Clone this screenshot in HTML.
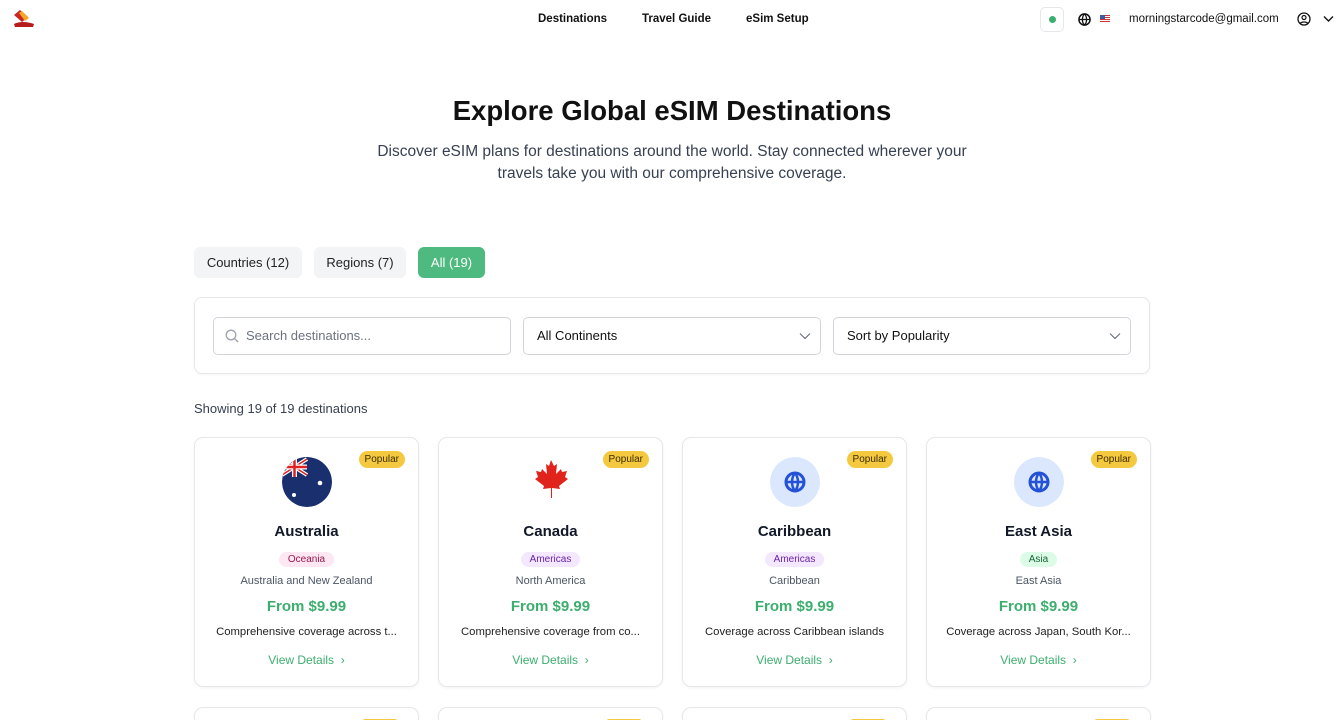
<!DOCTYPE html>
<html style="width:1344px;height:720px;overflow:hidden"><head><meta charset="utf-8"><style>
*{box-sizing:border-box;margin:0;padding:0}
body{width:1344px;height:720px;overflow:hidden;background:#fff;font-family:"Liberation Sans",sans-serif;color:#111827;position:relative}
.abs{position:absolute}
.nav a{position:absolute;top:13px;font-size:11.5px;font-weight:bold;color:#111}
h1{position:absolute;top:95px;width:1344px;text-align:center;font-size:27.5px;font-weight:bold;color:#111}
.sub{position:absolute;top:141px;left:362px;width:620px;text-align:center;font-size:15.5px;line-height:22px;color:#374151}
.tab{position:absolute;top:247px;height:31px;border-radius:6px;background:#f3f4f6;font-size:13px;line-height:31px;text-align:center;color:#222}
.filter{position:absolute;left:194px;top:297px;width:956px;height:77px;border:1px solid #e5e7eb;border-radius:8px;box-shadow:0 1px 2px rgba(0,0,0,.04)}
.inp{position:absolute;top:19px;height:38px;width:298px;border:1px solid #d1d5db;border-radius:5px;font-size:13px;line-height:36px;padding-left:13px;color:#111}
.card{position:absolute;width:225px;height:250px;border:1px solid #e5e7eb;border-radius:9px;text-align:center;box-shadow:0 1px 3px rgba(0,0,0,.05);overflow:hidden}
.pop{position:absolute;right:13px;top:13px;background:#f5c93f;border-radius:10px;font-size:10px;padding:3px 6px;color:#3a2c00}
.ic{position:absolute;left:87px;top:19px;width:50px;height:50px;border-radius:50%}
.name{position:absolute;top:85px;width:100%;font-size:15px;font-weight:bold}
.tag{display:inline-block;position:relative;top:111px;font-size:10px;padding:2px 9px;border-radius:9px}
.reg{position:absolute;top:137px;width:100%;font-size:11px;color:#4b5563}
.price{position:absolute;top:160px;width:100%;font-size:15px;font-weight:bold;color:#3cae6e}
.desc{position:absolute;top:188px;width:100%;font-size:11.3px;color:#222}
.vd{position:absolute;top:215px;width:100%;font-size:12px;color:#3cae6e}
</style></head><body>
<svg class="abs" style="left:12px;top:9px" width="24" height="20" viewBox="0 0 24 20"><path d="M2 6 L8 1 L16 8 L10 13Z" fill="#c62828"/><path d="M7 4 L10 2 L17 9 L13 12Z" fill="#f5a623"/><path d="M2 15 Q10 11 22 15 L21 18 L3 18Z" fill="#b71c1c"/></svg>
<div class="nav"><a style="left:538px">Destinations</a><a style="left:642px">Travel Guide</a><a style="left:746px">eSim Setup</a></div>
<div class="abs" style="left:1040px;top:7px;width:24px;height:25px;border:1px solid #e5e7eb;border-radius:5px"><div class="abs" style="left:8px;top:8px;width:7px;height:7px;border-radius:50%;background:#3cae6e"></div></div>
<svg class="abs" style="left:1078px;top:13px" width="13" height="13" viewBox="0 0 14 14"><circle cx="7" cy="7" r="6" fill="none" stroke="#111" stroke-width="1.6"/><path d="M1 7h12M7 1c-3 3-3 9 0 12M7 1c3 3 3 9 0 12" fill="none" stroke="#111" stroke-width="1.4"/></svg>
<div class="abs" style="left:1100px;top:15px;width:10px;height:7px;background:repeating-linear-gradient(#c33 0 1px,#fff 1px 2px)"><div style="width:5px;height:4px;background:#3c5aa6"></div></div>
<div class="abs" style="left:1129px;top:13px;font-size:11.5px;color:#111">morningstarcode@gmail.com</div>
<svg class="abs" style="left:1297px;top:12px" width="14" height="14" viewBox="0 0 14 14"><circle cx="7" cy="7" r="6" fill="none" stroke="#111" stroke-width="1.3"/><circle cx="7" cy="5.5" r="2" fill="none" stroke="#111" stroke-width="1.2"/><path d="M3.2 11.5c1-2 6.6-2 7.6 0" fill="none" stroke="#111" stroke-width="1.2"/></svg>
<svg class="abs" style="left:1323px;top:15px" width="11" height="8" viewBox="0 0 11 8"><path d="M1 1.5l4.5 4.5L10 1.5" fill="none" stroke="#111" stroke-width="1.4"/></svg>
<h1>Explore Global eSIM Destinations</h1>
<div class="sub">Discover eSIM plans for destinations around the world. Stay connected wherever your travels take you with our comprehensive coverage.</div>
<div class="tab" style="left:194px;width:108px">Countries (12)</div>
<div class="tab" style="left:314px;width:92px">Regions (7)</div>
<div class="tab" style="left:418px;width:67px;background:#4fba80;color:#fff">All (19)</div>
<div class="filter">
<div class="inp" style="left:18px;padding-left:32px;color:#6b7280">Search destinations...<svg class="abs" style="left:11px;top:11px" width="14" height="14" viewBox="0 0 14 14"><circle cx="6" cy="6" r="4.8" fill="none" stroke="#9ca3af" stroke-width="1.3"/><path d="M9.5 9.5L13 13" stroke="#9ca3af" stroke-width="1.3"/></svg></div>
<div class="inp" style="left:328px">All Continents<svg class="abs" style="right:9px;top:14px" width="12" height="8" viewBox="0 0 12 8"><path d="M1 1.5l5 5 5-5" fill="none" stroke="#6b7280" stroke-width="1.2"/></svg></div>
<div class="inp" style="left:638px">Sort by Popularity<svg class="abs" style="right:9px;top:14px" width="12" height="8" viewBox="0 0 12 8"><path d="M1 1.5l5 5 5-5" fill="none" stroke="#6b7280" stroke-width="1.2"/></svg></div>
</div>
<div class="abs" style="left:194px;top:401px;font-size:13px;color:#374151">Showing 19 of 19 destinations</div>

<div class="card" style="left:194px;top:437px"><div class="pop">Popular</div>
<svg class="ic" viewBox="0 0 50 50"><circle cx="25" cy="25" r="25" fill="#1a2f6e"/><rect x="0" y="0" width="25" height="20" fill="#1a2f6e"/><path d="M0 2L25 18M0 18L25 2" stroke="#fff" stroke-width="4"/><path d="M0 2L25 18M0 18L25 2" stroke="#d22" stroke-width="1.5"/><path d="M12.5 0v20M0 10h25" stroke="#fff" stroke-width="5"/><path d="M12.5 0v20M0 10h25" stroke="#d22" stroke-width="2.5"/><circle cx="38" cy="26" r="2.3" fill="#fff"/><circle cx="12" cy="38" r="2" fill="#fff"/></svg>
<div class="name">Australia</div><span class="tag" style="background:#fce7f3;color:#9d174d">Oceania</span>
<div class="reg">Australia and New Zealand</div><div class="price">From $9.99</div><div class="desc">Comprehensive coverage across t...</div><div class="vd">View Details &nbsp;›</div></div>

<div class="card" style="left:438px;top:437px"><div class="pop">Popular</div>
<svg class="ic" viewBox="0 0 50 50"><path d="M25 3l3 6 3-2-1 10 5-5 1 3 5-1-2 6 3 2-9 7 1 3-8-1v10h-1V31l-8 1 1-3-9-7 3-2-2-6 5 1 1-3 5 5-1-10 3 2z" fill="#e0241b"/></svg>
<div class="name">Canada</div><span class="tag" style="background:#f3e8ff;color:#6b21a8">Americas</span>
<div class="reg">North America</div><div class="price">From $9.99</div><div class="desc">Comprehensive coverage from co...</div><div class="vd">View Details &nbsp;›</div></div>

<div class="card" style="left:682px;top:437px"><div class="pop">Popular</div>
<svg class="ic" viewBox="0 0 50 50"><circle cx="25" cy="25" r="25" fill="#dbe7fd"/><circle cx="25" cy="25" r="9" fill="none" stroke="#2452d6" stroke-width="3"/><path d="M16 25h18M25 16c-4 5-4 13 0 18M25 16c4 5 4 13 0 18" fill="none" stroke="#2452d6" stroke-width="2.5"/></svg>
<div class="name">Caribbean</div><span class="tag" style="background:#f3e8ff;color:#6b21a8">Americas</span>
<div class="reg">Caribbean</div><div class="price">From $9.99</div><div class="desc">Coverage across Caribbean islands</div><div class="vd">View Details &nbsp;›</div></div>

<div class="card" style="left:926px;top:437px"><div class="pop">Popular</div>
<svg class="ic" viewBox="0 0 50 50"><circle cx="25" cy="25" r="25" fill="#dbe7fd"/><circle cx="25" cy="25" r="9" fill="none" stroke="#2452d6" stroke-width="3"/><path d="M16 25h18M25 16c-4 5-4 13 0 18M25 16c4 5 4 13 0 18" fill="none" stroke="#2452d6" stroke-width="2.5"/></svg>
<div class="name">East Asia</div><span class="tag" style="background:#dcfce7;color:#166534">Asia</span>
<div class="reg">East Asia</div><div class="price">From $9.99</div><div class="desc">Coverage across Japan, South Kor...</div><div class="vd">View Details &nbsp;›</div></div>

<div class="card" style="left:194px;top:707px;height:13px;border-bottom:none;border-radius:9px 9px 0 0"><div class="pop" style="right:20px;width:36px;top:11px;height:6px;padding:0"></div></div>
<div class="card" style="left:438px;top:707px;height:13px;border-bottom:none;border-radius:9px 9px 0 0"><div class="pop" style="right:20px;width:36px;top:11px;height:6px;padding:0"></div></div>
<div class="card" style="left:682px;top:707px;height:13px;border-bottom:none;border-radius:9px 9px 0 0"><div class="pop" style="right:20px;width:36px;top:11px;height:6px;padding:0"></div></div>
<div class="card" style="left:926px;top:707px;height:13px;border-bottom:none;border-radius:9px 9px 0 0"><div class="pop" style="right:20px;width:36px;top:11px;height:6px;padding:0"></div></div>
</body></html>
